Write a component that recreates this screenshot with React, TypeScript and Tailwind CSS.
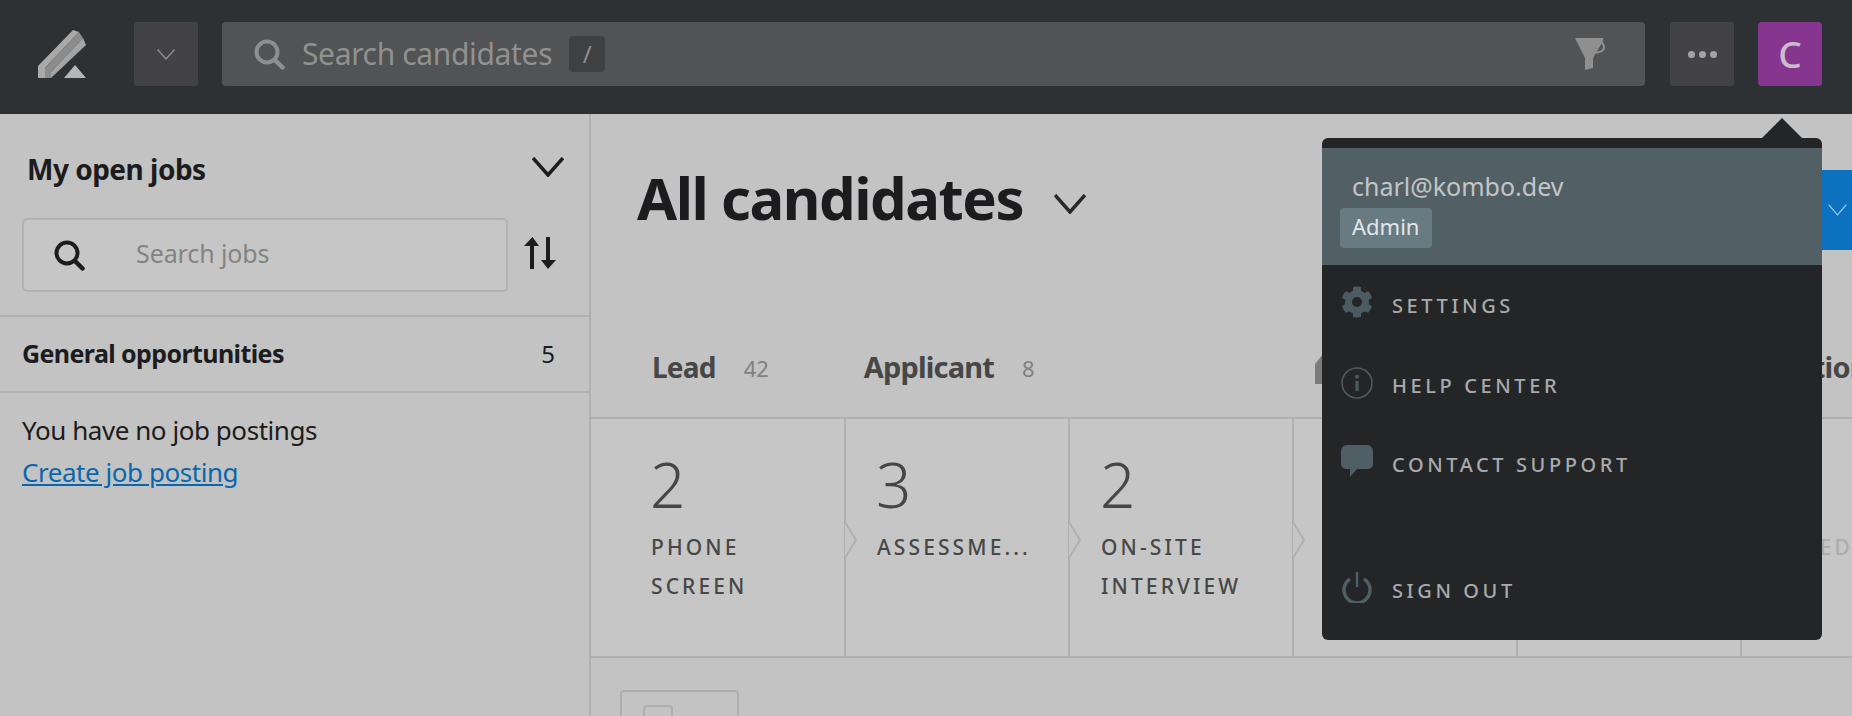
import { FaCog } from 'react-icons/fa'

const stages = [
  { count: '2', lines: ['PHONE', 'SCREEN'], cls: 'w-[255px] pl-[60px]' },
  { count: '3', lines: ['ASSESSME...'], cls: 'w-[224px] pl-[31px]' },
  { count: '2', lines: ['ON-SITE', 'INTERVIEW'], cls: 'w-[224px] pl-[31px]' },
  { count: '', lines: [], cls: 'w-[224px] pl-[32px]' },
  { count: '', lines: [], cls: 'w-[224px] pl-[32px]' },
]

function SearchIcon({ className }: { className: string }) {
  return (
    <svg viewBox="0 0 31 31" className={className} fill="none" stroke="currentColor">
      <circle cx="13" cy="13" r="10.5" strokeWidth="4" />
      <path d="M21 21l7.5 7.5" strokeWidth="4.5" strokeLinecap="round" />
    </svg>
  )
}

function Chevron({ className, width = 2 }: { className: string; width?: number }) {
  return (
    <svg viewBox="0 0 32 20" className={className} fill="none" stroke="currentColor" strokeWidth={width} preserveAspectRatio="none">
      <path d="M1 1l15 17L31 1" />
    </svg>
  )
}

function Logo() {
  return (
    <svg viewBox="0 0 48 48" className="w-[48px] h-[48px] shrink-0">
      <path d="M0 36L35 0l6 2L7 38v10H0z" fill="#a9a9a9" />
      <path d="M7 38L41 2l4 6-32 34v6H7z" fill="#8c8c8c" />
      <path d="M13 42L45 8l3 7-35 33z" fill="#a4a4a4" />
      <path d="M26 48l11-13 11 13z" fill="#b6b6b6" />
    </svg>
  )
}

function Stage({ count, lines, cls }: { count: string; lines: string[]; cls: string }) {
  return (
    <div className={`relative shrink-0 h-full ${cls}`}>
      <div className="pt-[28px] ml-[-1px] text-[62px] leading-[74px] font-light text-[#464646]">{count}</div>
      <div className="mt-[7px] text-[21px] leading-[39px] tracking-[3.1px] font-medium text-[#474747]">
        {lines.map((l) => (
          <div key={l}>{l}</div>
        ))}
      </div>
      <div className="absolute right-0 top-0 bottom-0 w-[2px] bg-[#b0b0b0]" />
      <svg viewBox="0 0 14 36" className="absolute right-[-12px] top-[103px] w-[14px] h-[36px]" fill="#c6c6c6" stroke="#b0b0b0" strokeWidth="2">
        <path d="M1 0l11 18L1 36" />
      </svg>
    </div>
  )
}

const menuLabel = 'ml-[19px] text-[20px] tracking-[3.6px] font-medium text-[#a9aaab]'

export default function App() {
  return (
    <div className="relative w-[1852px] h-[716px] overflow-hidden bg-[#c3c3c3] font-['Noto_Sans',sans-serif] text-[#1c1c1e]">
      {/* top bar */}
      <header className="h-[114px] bg-[#2d3133] flex items-start pt-[22px] pl-[38px]">
        <div className="mt-[8px]">
          <Logo />
        </div>
        <button className="ml-[48px] w-[64px] h-[64px] rounded-[4px] bg-[#434345] flex items-center justify-center">
          <Chevron className="w-[18px] h-[11px] text-[#8f8f8f]" width={2.5} />
        </button>
        <div className="ml-[24px] w-[1423px] h-[64px] rounded-[4px] bg-[#525355] flex items-center pl-[32px] pr-[40px]">
          <SearchIcon className="w-[31px] h-[31px] text-[#8f8f8f]" />
          <span className="ml-[17px] mt-[-2px] text-[30px] tracking-[-0.35px] text-[#919191]">Search candidates</span>
          <span className="ml-[17px] w-[36px] h-[36px] rounded-[4px] bg-[#3f4042] flex items-center justify-center text-[24px] text-[#8f8f8f]">/</span>
          <svg viewBox="0 0 30 32" className="ml-auto w-[30px] h-[32px]">
            <path d="M0 0h28v3L18 20v10l-8 2V20z" fill="#8f8f8f" />
            <path d="M21 5a5 5 0 1 1 3 9l-6 1" fill="none" stroke="#8f8f8f" strokeWidth="2" />
          </svg>
        </div>
        <button className="ml-[25px] w-[64px] h-[64px] rounded-[4px] bg-[#434345] flex items-center justify-center gap-[4px]">
          <span className="w-[7px] h-[7px] rounded-full bg-[#a4a4a4]" />
          <span className="w-[7px] h-[7px] rounded-full bg-[#a4a4a4]" />
          <span className="w-[7px] h-[7px] rounded-full bg-[#a4a4a4]" />
        </button>
        <div className="ml-[24px] w-[64px] h-[64px] rounded-[4px] bg-[#873690] flex items-center justify-center text-[37px] font-medium text-[#c9bccb]">C</div>
      </header>

      <div className="flex h-[602px]">
        {/* left column */}
        <aside className="w-[591px] shrink-0 border-r-2 border-[#afafaf]">
          <div className="h-[203px] border-b-2 border-[#b0b0b0] pl-[22px] pr-[25px]">
            <div className="flex items-center justify-between h-[104px] pl-[5px]">
              <h2 className="mt-[6px] text-[28px] font-bold tracking-[-0.5px]">My open jobs</h2>
              <Chevron className="mt-[2px] w-[32px] h-[20px] text-[#1c1c1e]" width={3.5} />
            </div>
            <div className="flex items-center">
              <div className="w-[486px] h-[74px] rounded-[5px] border-2 border-[#b2b2b2] bg-[#c6c6c6] flex items-center pl-[30px]">
                <SearchIcon className="w-[31px] h-[31px] text-[#1c1c1e]" />
                <span className="ml-[51px] mt-[-2px] text-[25px] tracking-[-0.1px] text-[#838383]">Search jobs</span>
              </div>
              <svg viewBox="0 0 32 32" className="ml-[16px] mt-[-4px] w-[32px] h-[32px]" fill="#1c1c1e">
                <path d="M6 32V9H0L8.5 0 15 9h-5v23zM22 0h4v23h6l-8 9-7-9h5z" />
              </svg>
            </div>
          </div>
          <div className="h-[76px] border-b-2 border-[#b0b0b0] pl-[22px] pr-[34px] flex items-center justify-between">
            <span className="text-[25px] font-bold tracking-[-0.6px]">General opportunities</span>
            <span className="text-[24px]">5</span>
          </div>
          <div className="pl-[22px] pt-[16px] text-[26px] leading-[42px] tracking-[-0.45px]">
            <p>You have no job postings</p>
            <a href="#" className="text-[#0a67ad] underline">Create job posting</a>
          </div>
        </aside>

        {/* right column */}
        <main className="flex-1 min-w-0 overflow-hidden">
          <div className="h-[103px] flex items-center pl-[46px] pt-[64px]">
            <h1 className="text-[58px] font-bold tracking-[-1.45px] leading-[64px]">All candidates</h1>
            <Chevron className="ml-[31px] mt-[12px] w-[32px] h-[20px] text-[#28292b]" width={3.5} />
          </div>
          <div className="h-[202px] flex items-end border-b-2 border-[#b0b0b0] pb-[29px] pl-[61px]">
            <span className="text-[28px] font-bold tracking-[-0.8px] text-[#474747]">Lead</span>
            <span className="ml-[28px] mb-[3px] text-[22px] text-[#7f7f7f]">42</span>
            <span className="ml-[95px] text-[29px] font-bold tracking-[-0.85px] text-[#474747]">Applicant</span>
            <span className="ml-[28px] mb-[3px] text-[22px] text-[#7f7f7f]">8</span>
            <svg viewBox="0 0 24 30" className="ml-[280px] mb-[4px] w-[24px] h-[30px] shrink-0" fill="#7c7c7c">
              <path d="M0 10L8 0h16v30H0z" />
            </svg>
            <span className="ml-[418px] text-[29px] font-bold tracking-[-0.8px] text-[#474747] whitespace-nowrap">Position</span>
          </div>
          <div className="h-[239px] bg-[#c6c6c6] border-b-2 border-[#b0b0b0] flex">
            {stages.map((s, i) => (
              <Stage key={i} count={s.count} lines={s.lines} cls={s.cls} />
            ))}
            <div className="relative shrink-0 w-[111px] pl-[32px] pt-[109px] text-[21px] leading-[39px] tracking-[3.1px] font-medium text-[#adadad] whitespace-nowrap">HIRED</div>
          </div>
          <div className="pl-[29px] pt-[32px]">
            <div className="w-[119px] h-[60px] rounded-[4px] border-2 border-[#aeaeae] pl-[21px] pt-[13px]">
              <div className="w-[30px] h-[30px] rounded-[4px] border-2 border-[#aeaeae]" />
            </div>
          </div>
        </main>
      </div>

      {/* blue action button, mostly covered by the menu */}
      <div className="absolute left-[1760px] top-[170px] w-[92px] h-[80px] bg-[#0c72bf] flex items-center justify-end pr-[5px]">
        <Chevron className="w-[19px] h-[12px] text-[#a9d0ec]" width={2} />
      </div>

      {/* user menu */}
      <div className="absolute left-[1322px] top-[138px] w-[500px] h-[502px] rounded-[6px] bg-[#232527] pt-[10px]">
        <div className="absolute right-[20px] top-[-20px] w-0 h-0 border-l-[20px] border-r-[20px] border-b-[20px] border-l-transparent border-r-transparent border-b-[#232527]" />
        <div className="h-[117px] bg-[#526066] pt-[20px]">
          <div className="pl-[30px] text-[25px] leading-[36px] tracking-[0px] text-[#c3c5c6]">charl@kombo.dev</div>
          <span className="ml-[18px] mt-[4px] inline-flex items-center h-[40px] w-[92px] pl-[12px] pb-[3px] rounded-[4px] bg-[#697b82] text-[22px] text-[#e4e6e7]">Admin</span>
        </div>
        <div className="flex items-center h-[82px] pl-[19px] pb-[2px]">
          <FaCog className="w-[32px] h-[32px] text-[#4c5b61] mt-[-6px]" />
          <span className={`${menuLabel} mt-[2px]`}>SETTINGS</span>
        </div>
        <div className="flex items-center h-[76px] pl-[19px] pt-[2px]">
          <svg viewBox="0 0 32 32" className="w-[32px] h-[32px] mt-[-6px]" fill="#4c5b61">
            <circle cx="16" cy="16" r="15" fill="none" stroke="#4c5b61" strokeWidth="1.6" />
            <rect x="14.4" y="14" width="3.2" height="10" />
            <circle cx="16" cy="9.8" r="2" />
          </svg>
          <span className={menuLabel}>HELP CENTER</span>
        </div>
        <div className="flex items-center h-[82px] pl-[19px] pt-[2px]">
          <svg viewBox="0 0 32 32" className="w-[32px] h-[32px] mt-[-8px]" fill="#4f5f65">
            <path d="M6 0h20a6 6 0 0 1 6 6v13a5 5 0 0 1-5 5H16l-7 8v-8H5a5 5 0 0 1-5-5V6a6 6 0 0 1 6-6z" />
          </svg>
          <span className={menuLabel}>CONTACT SUPPORT</span>
        </div>
        <div className="flex items-center h-[82px] pl-[19px] mt-[44px] pt-[2px]">
          <svg viewBox="0 0 32 32" className="w-[32px] h-[32px] mt-[-8px]" fill="none" stroke="#4f5f65" strokeWidth="3.4">
            <path d="M16 1v15" strokeWidth="2.4" />
            <path d="M9 8a13 13 0 1 0 14 0" />
          </svg>
          <span className={menuLabel}>SIGN OUT</span>
        </div>
      </div>
    </div>
  )
}
